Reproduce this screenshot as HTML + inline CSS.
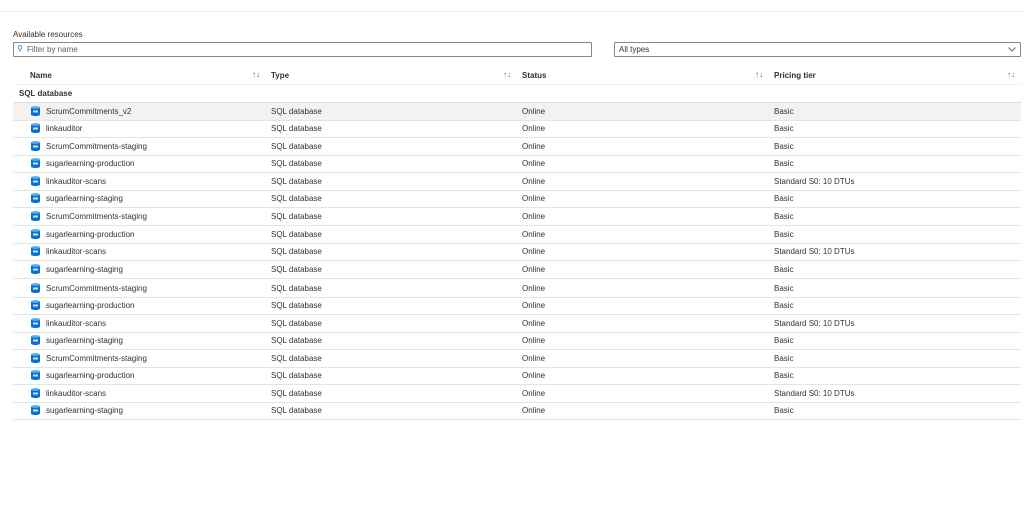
<!DOCTYPE html><html><head><style>
body{margin:0;width:1024px;height:512px;background:#fff;font-family:"Liberation Sans",sans-serif;font-size:8px;color:#323130;position:relative;overflow:hidden}
.a{position:absolute;white-space:nowrap}
.r{position:absolute;left:13px;width:1008px;height:17px;border-bottom:1px solid #e6e4e2}
.r span{position:absolute;top:4px}
.ic{position:absolute;left:18px;top:3px;width:9px;height:10px}
.s{position:absolute;font-size:8px;color:#605e5c}
</style></head><body>
<div class="a" style="left:0;top:11px;width:1024px;height:1px;background:#edebe9"></div>
<div class="a" style="left:13px;top:30px">Available resources</div>
<div class="a" style="left:13px;top:42px;width:577px;height:13px;border:1px solid #8a8886;border-radius:1px"><span style="position:absolute;left:3px;top:1px;color:#0078d4;font-size:8px">⚲</span><span style="position:absolute;left:13px;top:2px;color:#605e5c">Filter by name</span></div>
<div class="a" style="left:614px;top:42px;width:405px;height:13px;border:1px solid #8a8886;border-radius:1px"><span style="position:absolute;left:4px;top:2px">All types</span><svg style="position:absolute;right:4px;top:4px" width="8" height="5" viewBox="0 0 8 5"><path d="M0.5 0.5L4 4L7.5 0.5" fill="none" stroke="#605e5c" stroke-width="0.9"/></svg></div>
<div class="a" style="left:30px;top:71px;font-weight:bold">Name</div>
<div class="a" style="left:271px;top:71px;font-weight:bold">Type</div>
<div class="a" style="left:522px;top:71px;font-weight:bold">Status</div>
<div class="a" style="left:774px;top:71px;font-weight:bold">Pricing tier</div>
<div class="a s" style="left:252px;top:70px">↑↓</div><div class="a s" style="left:503px;top:70px">↑↓</div><div class="a s" style="left:755px;top:70px">↑↓</div><div class="a s" style="left:1007px;top:70px">↑↓</div>
<div class="a" style="left:13px;top:84px;width:1008px;height:1px;background:#f3f2f1"></div>
<div class="a" style="left:19px;top:89px;font-weight:bold">SQL database</div>
<div id="rows"></div>
<script>
var d=[["ScrumCommitments_v2","Basic"],["linkauditor","Basic"],["ScrumCommitments-staging","Basic"],["sugarlearning-production","Basic"],["linkauditor-scans","Standard S0: 10 DTUs"],["sugarlearning-staging","Basic"],["ScrumCommitments-staging","Basic"],["sugarlearning-production","Basic"],["linkauditor-scans","Standard S0: 10 DTUs"],["sugarlearning-staging","Basic"],["ScrumCommitments-staging","Basic"],["sugarlearning-production","Basic"],["linkauditor-scans","Standard S0: 10 DTUs"],["sugarlearning-staging","Basic"],["ScrumCommitments-staging","Basic"],["sugarlearning-production","Basic"],["linkauditor-scans","Standard S0: 10 DTUs"],["sugarlearning-staging","Basic"]];
var c=[111,128,146,163,181,198,216,234,251,269,288,305,323,340,358,375,393,410],h="";
var ic='<svg class="ic" viewBox="0 0 9 10"><path d="M0 1.5v7c0 .8 2 1.5 4.5 1.5S9 9.3 9 8.5v-7z" fill="#0a6ed1"/><ellipse cx="4.5" cy="1.5" rx="4.5" ry="1.4" fill="#50b0f0"/><rect x="2" y="4.5" width="5" height="2" fill="#fff" opacity=".8"/></svg>';
d.forEach(function(x,i){var t=c[i]-8;h+='<div class="r" style="top:'+t+'px;'+(i==0?'background:#f3f2f1;border-top:1px solid #e1dfdd;top:'+(t-1)+'px':'')+'">'+ic+'<span style="left:33px">'+x[0]+'</span><span style="left:258px">SQL database</span><span style="left:509px">Online</span><span style="left:761px">'+x[1]+'</span></div>';});
document.getElementById("rows").innerHTML=h;
</script>
</body></html>
